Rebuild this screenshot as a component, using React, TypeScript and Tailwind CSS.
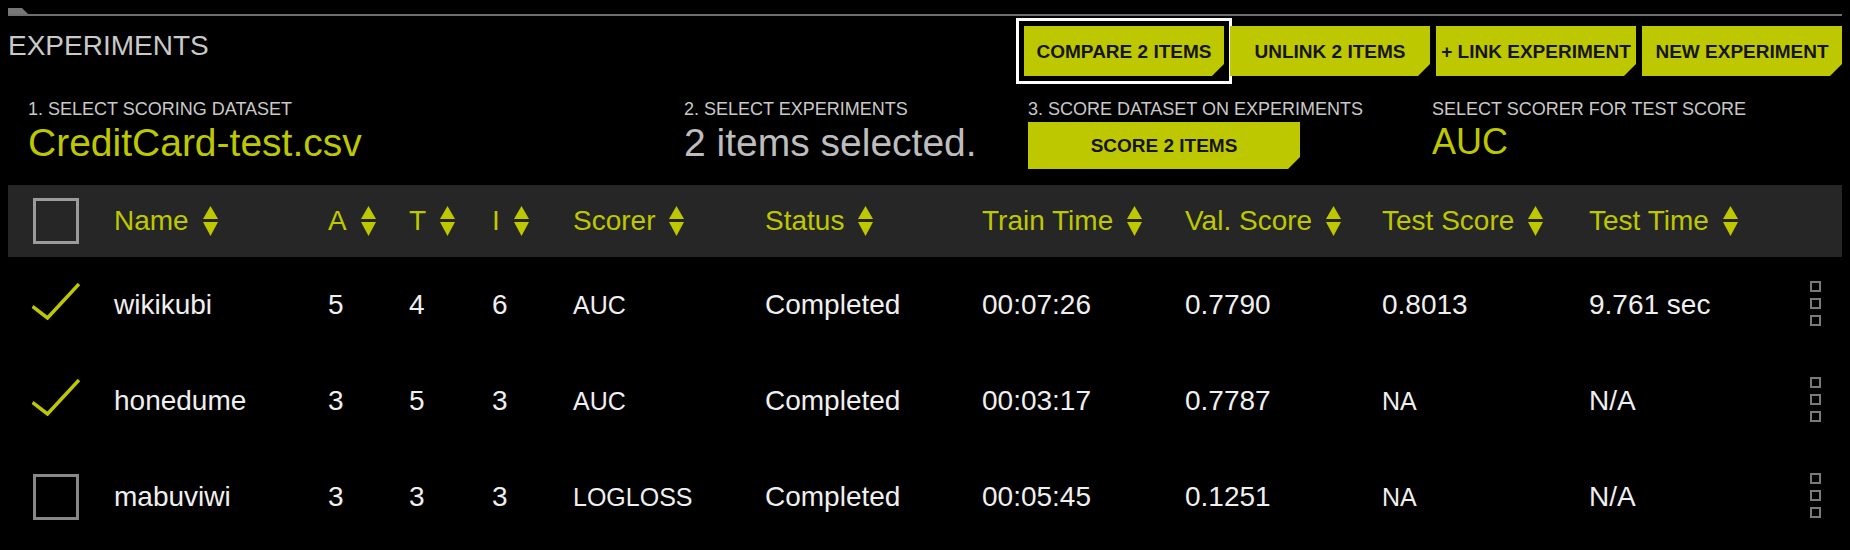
import React from 'react';

const GREEN = 'text-[#bec800]';

const font = "font-['Liberation_Sans',Arial,sans-serif]";

const cutCorner =
  '[clip-path:polygon(0_0,100%_0,100%_calc(100%_-_12px),calc(100%_-_12px)_100%,0_100%)]';

const SortArrows: React.FC = () => (
  <svg width="15" height="30" viewBox="0 0 15 30" className="ml-[14px] shrink-0">
    <polygon points="7.5,0 15,13 0,13" fill="#bec800" />
    <polygon points="0,16 15,16 7.5,30" fill="#bec800" />
  </svg>
);

const Check: React.FC = () => (
  <svg width="48" height="37" viewBox="0 0 48 37" className="-ml-[1px] -mt-[8px]">
    <polyline points="0.5,23.5 15.5,35 47,1" fill="none" stroke="#bec800" strokeWidth="3.5" />
  </svg>
);

const Box: React.FC<{ light?: boolean }> = ({ light }) => (
  <div
    className={
      'w-[46px] h-[46px] border-[3px] ' + (light ? 'border-[#9b9b9b]' : 'border-[#888888]')
    }
  />
);

const MenuDots: React.FC = () => (
  <div className="flex flex-col gap-[6px] -mt-[4px]">
    <div className="w-[11px] h-[11px] border-2 border-[#7a7a7a]" />
    <div className="w-[11px] h-[11px] border-2 border-[#7a7a7a]" />
    <div className="w-[11px] h-[11px] border-2 border-[#7a7a7a]" />
  </div>
);

const ActionButton: React.FC<{ label: string; focused?: boolean }> = ({ label, focused }) => (
  <div className={focused ? 'outline-[3px] outline-solid outline-white outline-offset-[5px]' : ''}>
    <button
      className={
        'w-[200px] h-[50px] bg-[#bec800] flex items-center justify-center whitespace-nowrap text-[#151515] font-bold text-[19px] leading-none ' +
        cutCorner
      }
    >
      {label}
    </button>
  </div>
);

const columns = [
  { key: 'name', label: 'Name' },
  { key: 'a', label: 'A' },
  { key: 't', label: 'T' },
  { key: 'i', label: 'I' },
  { key: 'scorer', label: 'Scorer' },
  { key: 'status', label: 'Status' },
  { key: 'train', label: 'Train Time' },
  { key: 'val', label: 'Val. Score' },
  { key: 'test', label: 'Test Score' },
  { key: 'testTime', label: 'Test Time' },
];

const rows = [
  { checked: true, name: 'wikikubi', a: '5', t: '4', i: '6', scorer: 'AUC', status: 'Completed', train: '00:07:26', val: '0.7790', test: '0.8013', testTime: '9.761 sec' },
  { checked: true, name: 'honedume', a: '3', t: '5', i: '3', scorer: 'AUC', status: 'Completed', train: '00:03:17', val: '0.7787', test: 'NA', testTime: 'N/A' },
  { checked: false, name: 'mabuviwi', a: '3', t: '3', i: '3', scorer: 'LOGLOSS', status: 'Completed', train: '00:05:45', val: '0.1251', test: 'NA', testTime: 'N/A' },
];

const gridCols =
  'grid grid-cols-[81px_214px_81px_83px_81px_192px_217px_203px_197px_207px_220px_1fr] pl-[25px]';

const label = 'text-[18px] leading-none whitespace-nowrap text-[#c9c9c9]';

export default function App() {
  return (
    <div className={'min-h-screen w-full bg-black px-[8px] pt-[8px] ' + font}>
      {/* top rule with tab */}
      <div className="w-[20px] h-[6px] bg-[#777777] [clip-path:polygon(0_0,70%_0,100%_100%,0_100%)]" />
      <div className="h-[2px] bg-[#6f6f6f]" />

      {/* title + actions */}
      <div className="flex items-start mt-[10px]">
        <h1 className="mt-[6px] text-[28px] leading-none text-[#c9c9c9]">EXPERIMENTS</h1>
        <div className="ml-auto flex gap-[6px]">
          <ActionButton label="COMPARE 2 ITEMS" focused />
          <ActionButton label="UNLINK 2 ITEMS" />
          <ActionButton label="+ LINK EXPERIMENT" />
          <ActionButton label="NEW EXPERIMENT" />
        </div>
      </div>

      {/* scoring steps */}
      <div className="flex mt-[24px] pl-[20px]">
        <div className="w-[656px]">
          <div className={label}>1. SELECT SCORING DATASET</div>
          <div className={'mt-[5px] text-[39px] leading-none ' + GREEN}>CreditCard-test.csv</div>
        </div>
        <div className="w-[344px]">
          <div className={label}>2. SELECT EXPERIMENTS</div>
          <div className="mt-[5px] text-[39px] leading-none text-[#bdbdbd]">2 items selected.</div>
        </div>
        <div className="w-[404px]">
          <div className={label}>3. SCORE DATASET ON EXPERIMENTS</div>
          <button
            className={
              'mt-[4px] w-[272px] h-[47px] bg-[#bec800] flex items-center justify-center text-[#151515] font-bold text-[19px] leading-none ' +
              cutCorner
            }
          >
            SCORE 2 ITEMS
          </button>
        </div>
        <div>
          <div className={label}>SELECT SCORER FOR TEST SCORE</div>
          <div className={'mt-[6px] text-[36px] leading-none ' + GREEN}>AUC</div>
        </div>
      </div>

      {/* table */}
      <div className="mt-[16px]">
        <div className={gridCols + ' h-[72px] items-center bg-[#262626]'}>
          <Box light />
          {columns.map((c) => (
            <div key={c.key} className={'flex items-center text-[28px] leading-none ' + GREEN}>
              <span>{c.label}</span>
              <SortArrows />
            </div>
          ))}
          <div />
        </div>

        {rows.map((r) => (
          <div key={r.name} className={gridCols + ' h-[96px] items-center text-[28px] leading-none text-[#efefef]'}>
            <div>{r.checked ? <Check /> : <Box />}</div>
            <div>{r.name}</div>
            <div>{r.a}</div>
            <div>{r.t}</div>
            <div>{r.i}</div>
            <div className="text-[25px]">{r.scorer}</div>
            <div>{r.status}</div>
            <div>{r.train}</div>
            <div>{r.val}</div>
            <div className={r.test === 'NA' ? 'text-[25px]' : ''}>{r.test}</div>
            <div>{r.testTime}</div>
            <div className="pl-[1px]">
              <MenuDots />
            </div>
          </div>
        ))}
      </div>
    </div>
  );
}
